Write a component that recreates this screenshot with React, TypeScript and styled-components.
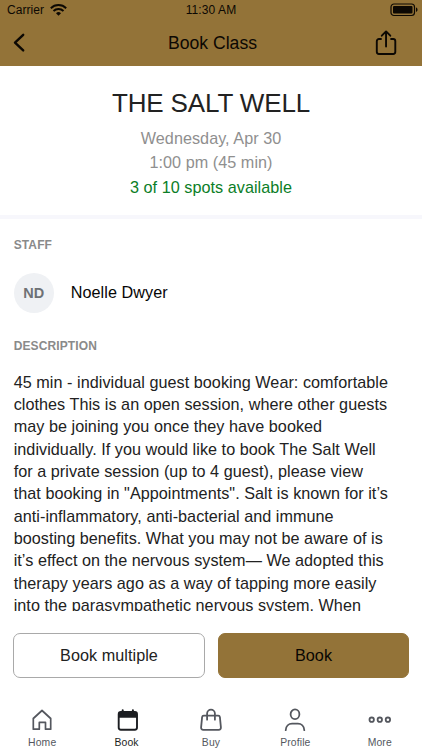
import React from "react";
import styled, { createGlobalStyle } from "styled-components";

const gold = "#937338";

const GlobalStyle = createGlobalStyle`
  *, *::before, *::after { box-sizing: border-box; }
  body { margin: 0; background: #fff; overflow: hidden; }
  button { font: inherit; color: inherit; background: none; border: 0; padding: 0; }
  h1, h2, p { margin: 0; font-weight: 400; }
  svg { display: block; flex: none; }
`;

const Screen = styled.div`
  width: 422px;
  height: 750px;
  display: flex;
  flex-direction: column;
  background: #fff;
  color: #222;
  font-family: "Liberation Sans", Arial, Helvetica, sans-serif;
  font-size: 16.2px;
  white-space: nowrap;
`;

const Header = styled.header`
  height: 66px;
  flex: none;
  background: ${gold};
  color: #0c0803;
`;

const StatusBar = styled.div`
  height: 20px;
  padding: 0 4px 0 7px;
  display: grid;
  grid-template-columns: 1fr auto 1fr;
  align-items: center;
  font-size: 12px;
`;

const Carrier = styled.div`
  display: flex;
  align-items: center;
  gap: 6px;
  letter-spacing: 0.05px;
`;

const Clock = styled.div`
  letter-spacing: 0.1px;
  padding-right: 3px;
`;

const BatterySlot = styled.div`
  justify-self: end;
`;

const NavBar = styled.div`
  height: 46px;
  padding: 0 24.500px 0 12px;
  display: grid;
  grid-template-columns: 1fr auto 1fr;
  align-items: center;
`;

const NavTitle = styled.h2`
  font-size: 17.6px;
  line-height: 46px;
  padding-left: 15.500px;
`;

const ShareButton = styled.button`
  justify-self: end;
`;

const Summary = styled.section`
  height: 153px;
  flex: none;
  display: flex;
  flex-direction: column;
  align-items: center;
  padding-top: 20px;
  border-bottom: 4px solid #f7f7fc;
  text-align: center;
`;

const ClassName = styled.h1`
  font-size: 26px;
  line-height: 34px;
  margin-bottom: 6px;
  letter-spacing: -0.13px;
`;

const SummaryLine = styled.p<{ $available?: boolean }>`
  font-size: 16.2px;
  line-height: 24.4px;
  letter-spacing: 0.04px;
  color: ${(p) => (p.$available ? "#0b7e27" : "#8f8f8f")};
`;

const Content = styled.main`
  height: 392px;
  flex: none;
  overflow: hidden;
  padding: 19px 14px 0 13.7px;
`;

const SectionLabel = styled.h2`
  font-size: 12px;
  line-height: 14px;
  font-weight: 700;
  letter-spacing: 0.12px;
  color: #8a8a8a;
`;

const StaffRow = styled.div`
  display: flex;
  align-items: center;
  gap: 17px;
  height: 41px;
  margin: 20px 0 26px;
  color: #060606;
  letter-spacing: 0.06px;
`;

const Avatar = styled.div`
  width: 40px;
  height: 40px;
  border-radius: 50%;
  display: grid;
  place-items: center;
  background: #eff1f4;
  color: #6e7175;
  font-size: 14.5px;
  font-weight: 700;
`;

const Description = styled.div`
  margin-top: 17.6px;
  line-height: 22.35px;
  letter-spacing: 0.04px;
`;

const Actions = styled.div`
  display: grid;
  grid-template-columns: 192px 191px;
  gap: 13px;
  padding: 22px 13px 0;
  height: 80px;
  flex: none;
`;

const ActionButton = styled.button<{ $primary?: boolean }>`
  height: 45px;
  border-radius: 7px;
  font-size: 16.2px;
  letter-spacing: 0.05px;
  border: 1px solid ${(p) => (p.$primary ? gold : "#a9a9a9")};
  background: ${(p) => (p.$primary ? gold : "#fff")};
  color: ${(p) => (p.$primary ? "#080603" : "#222")};
`;

const TabBar = styled.nav`
  display: grid;
  grid-template-columns: repeat(5, 84.4px);
  height: 59px;
`;

const Tab = styled.button<{ $active?: boolean }>`
  display: flex;
  flex-direction: column;
  align-items: center;
  justify-content: flex-start;
  padding-top: 17px;
  gap: 4px;
  font-size: 10.4px;
  line-height: 13px;
  letter-spacing: 0.12px;
  color: ${(p) => (p.$active ? "#1c1e22" : "#54575e")};
`;

const WifiIcon = () => (
  <svg width="17" height="12" viewBox="0 0 17 12" fill="none" stroke="currentColor" strokeWidth="1.9">
    <path d="M.8 4.2a11 11 0 0 1 15.4 0" />
    <path d="M3.5 7a7.1 7.1 0 0 1 10 0" />
    <path d="M8.5 11.8 6 9.3a3.6 3.6 0 0 1 5 0z" fill="currentColor" stroke="none" />
  </svg>
);

const BatteryIcon = () => (
  <svg width="28" height="14" viewBox="0 0 28 14" fill="none">
    <rect x="1" y="1" width="23.5" height="11.5" rx="3" stroke="currentColor" strokeWidth="1.2" />
    <rect x="3" y="3" width="19.5" height="7.5" rx="1" fill="currentColor" />
    <path d="M26 4.6c2 .6 2 3.8 0 4.4z" fill="currentColor" />
  </svg>
);

const BackIcon = () => (
  <svg width="13" height="20" viewBox="0 0 13 20" fill="none" stroke="currentColor" strokeWidth="2.4" strokeLinecap="round" strokeLinejoin="round">
    <path d="M11.2 1.8 3 9.6l8.2 7.8" />
  </svg>
);

const ShareIcon = () => (
  <svg width="23" height="26" viewBox="0 0 23 26" fill="none" stroke="currentColor" strokeWidth="1.9" strokeLinecap="round" strokeLinejoin="round">
    <path d="M6 9H4a2.2 2.2 0 0 0-2.2 2.2v10.6A2.2 2.2 0 0 0 4 24h14.100a2.200 2.200 0 0 0 2.200-2.200V11.200A2.200 2.200 0 0 0 18.100 9h-2" />
    <path d="M11.050 16.500V1.700M6.800 5.700l4.250-4.300 4.250 4.300" />
  </svg>
);

const iconProps = {
  width: 24,
  height: 24,
  viewBox: "0 0 24 24",
  fill: "none",
  stroke: "currentColor",
  strokeWidth: 1.8,
  strokeLinejoin: "round" as const,
  strokeLinecap: "round" as const,
};

const HomeIcon = () => (
  <svg {...iconProps} strokeWidth={1.7} strokeLinejoin="round">
    <path d="M3.300 10.500 12 2.500l8.700 8v10.700h-5.200v-6.800H9.300v6.800h-6z" />
  </svg>
);

const CalendarIcon = () => (
  <svg {...iconProps}>
    <rect x="3.700" y="4" width="18.300" height="17.800" rx="2.200" strokeWidth="1.900" />
    <path d="M3.500 9.800V5.800q0-2 2-2h14.700q2 0 2 2v4z" fill="currentColor" stroke="none" />
    <path d="M7.700 2.300v3M17.900 2.300v3" strokeWidth="2" />
  </svg>
);

const BagIcon = () => (
  <svg {...iconProps}>
    <path d="M4.800 7.700h14.400q1.500 0 1.700 1.500l1 10.200q.1 2.400-2.200 2.400H4.300q-2.300 0-2.200-2.400L3.100 9.200q.2-1.500 1.700-1.500Z" />
    <path d="M8.100 11.700V5.600a3.900 3.900 0 0 1 7.800 0v6.100" />
  </svg>
);

const ProfileIcon = () => (
  <svg {...iconProps}>
    <ellipse cx="12" cy="6.300" rx="4.400" ry="4.900" />
    <path d="M2.700 22.200c.2-4.200 3-6.500 6.400-6.500h5.800c3.400 0 6.200 2.300 6.400 6.500" />
  </svg>
);

const MoreIcon = () => (
  <svg {...iconProps}>
    <circle cx="3.700" cy="11.700" r="2.200" />
    <circle cx="11.800" cy="11.700" r="2.200" />
    <circle cx="19.900" cy="11.700" r="2.200" />
  </svg>
);

const lines = [
  "45 min - individual guest booking Wear: comfortable",
  "clothes This is an open session, where other guests",
  "may be joining you once they have booked",
  "individually. If you would like to book The Salt Well",
  "for a private session (up to 4 guest), please view",
  'that booking in "Appointments". Salt is known for it’s',
  "anti-inflammatory, anti-bacterial and immune",
  "boosting benefits. What you may not be aware of is",
  "it’s effect on the nervous system— We adopted this",
  "therapy years ago as a way of tapping more easily",
  "into the parasympathetic nervous system. When",
];

const tabs = [
  { label: "Home", Icon: HomeIcon },
  { label: "Book", Icon: CalendarIcon, active: true },
  { label: "Buy", Icon: BagIcon },
  { label: "Profile", Icon: ProfileIcon },
  { label: "More", Icon: MoreIcon },
];

export default function App() {
  return (
    <Screen>
      <GlobalStyle />
      <Header>
        <StatusBar>
          <Carrier>Carrier <WifiIcon /></Carrier>
          <Clock>11:30 AM</Clock>
          <BatterySlot><BatteryIcon /></BatterySlot>
        </StatusBar>
        <NavBar>
          <button aria-label="Back"><BackIcon /></button>
          <NavTitle>Book Class</NavTitle>
          <ShareButton aria-label="Share"><ShareIcon /></ShareButton>
        </NavBar>
      </Header>
      <Summary>
        <ClassName>THE SALT WELL</ClassName>
        <SummaryLine>Wednesday, Apr 30</SummaryLine>
        <SummaryLine>1:00 pm (45 min)</SummaryLine>
        <SummaryLine $available>3 of 10 spots available</SummaryLine>
      </Summary>
      <Content>
        <SectionLabel>STAFF</SectionLabel>
        <StaffRow>
          <Avatar>ND</Avatar>
          <span>Noelle Dwyer</span>
        </StaffRow>
        <SectionLabel>DESCRIPTION</SectionLabel>
        <Description>
          {lines.map((text) => (
            <p key={text}>{text}</p>
          ))}
        </Description>
      </Content>
      <Actions>
        <ActionButton>Book multiple</ActionButton>
        <ActionButton $primary>Book</ActionButton>
      </Actions>
      <TabBar>
        {tabs.map(({ label, Icon, active }) => (
          <Tab key={label} $active={active}>
            <Icon />
            {label}
          </Tab>
        ))}
      </TabBar>
    </Screen>
  );
}
